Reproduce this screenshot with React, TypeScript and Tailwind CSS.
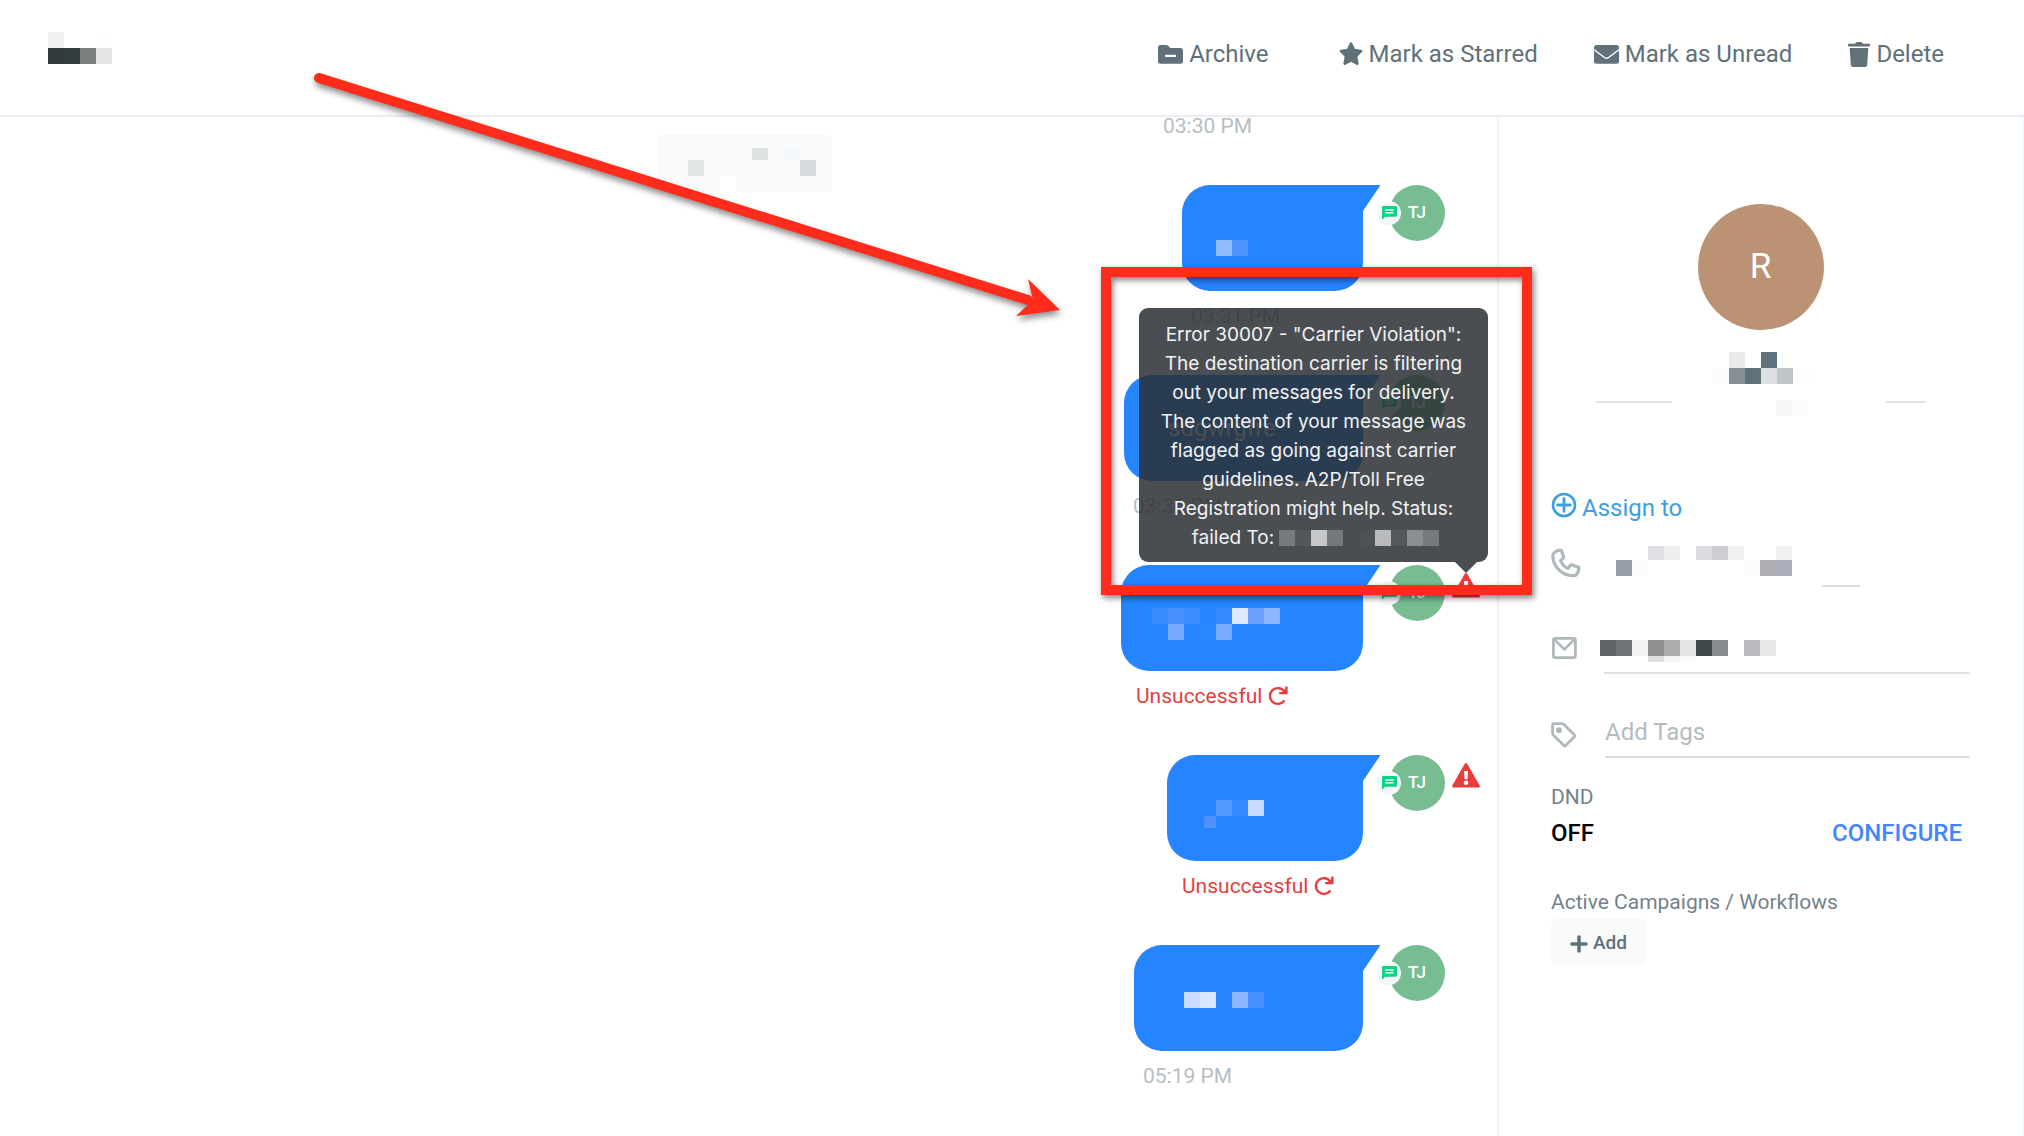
import React from "react";

type Row = string[];

/* Redacted text, drawn as rows of flat cells; an empty string leaves a gap. */
function Mosaic({ rows, className = "" }: { rows: { cells: Row; height?: string }[]; className?: string }) {
  return (
    <div aria-hidden="true" className={className}>
      {rows.map((row, i) => (
        <div key={i} className={`flex ${row.height ?? "h-4"}`}>
          {row.cells.map((c, j) => (
            <span key={j} className={`w-4 shrink-0 ${c}`} />
          ))}
        </div>
      ))}
    </div>
  );
}

function FolderIcon() {
  return (
    <svg viewBox="0 0 25 19" className="h-[19px] w-[25px]" fill="currentColor" aria-hidden="true">
      <path
        fillRule="evenodd"
        d="M2.6 0h5.8c.7 0 1.3.3 1.8.8l2 2.1h10.2A2.5 2.5 0 0 1 25 5.400v10.900a2.500 2.500 0 0 1-2.500 2.500h-20A2.500 2.500 0 0 1 0 16.300V2.600A2.600 2.600 0 0 1 2.600 0zM8 9.800a1.100 1.100 0 0 0 0 2.300h9a1.100 1.100 0 0 0 0-2.300z"
      />
    </svg>
  );
}

function StarIcon() {
  return (
    <svg viewBox="0 0 24 24" className="h-6 w-6" fill="currentColor" aria-hidden="true">
      <path
        d="M12 1.800 15 8.200l7 .9-5.100 4.900 1.300 7.600L12 18.300l-6.200 3.300 1.300-7.600L2 9.100l7-.9z"
        stroke="currentColor"
        strokeWidth="2.800"
        strokeLinejoin="round"
      />
    </svg>
  );
}

function EnvelopeIcon() {
  return (
    <svg viewBox="0 0 25 19" className="h-[19px] w-[25px]" aria-hidden="true">
      <rect width="25" height="18.800" rx="2.500" fill="currentColor" />
      <path d="M-.5 4.200 10.400 12.400c1.300 1 2.900 1 4.200 0L25.500 4.200" fill="none" stroke="#fff" strokeWidth="1.300" />
    </svg>
  );
}

function TrashIcon() {
  return (
    <svg viewBox="0 0 22 25" className="h-[25px] w-[22px]" fill="currentColor" aria-hidden="true">
      <path d="M1 1.700h6L8 .6C8.300.2 8.700 0 9.200 0h3.600c.5 0 .9.200 1.200.6l1 1.100h6c.6 0 1 .4 1 .9v1c0 .5-.4.900-1 .9H1c-.6 0-1-.4-1-.9v-1c0-.5.400-.9 1-.9zM1.700 6h18.600l-1.100 17a2.200 2.200 0 0 1-2.200 2H5a2.200 2.200 0 0 1-2.200-2z" />
    </svg>
  );
}

function RetryIcon() {
  return (
    <svg viewBox="0 0 20 20" className="h-5 w-5" fill="none" stroke="currentColor" strokeWidth="2.400" aria-hidden="true">
      <path d="M16.400 14.400a7.900 7.900 0 1 1 .2-8.500" />
      <path d="M11.200 7.100h7.200V.4" />
      <path d="M18.400 1.800v5.300h-5.400z" fill="currentColor" stroke="none" />
    </svg>
  );
}

function WarningIcon() {
  return (
    <svg viewBox="0 0 28 25" className="h-[25px] w-7" aria-hidden="true">
      <path d="M14 1.500 26.500 23.200h-25z" fill="#ec3d3d" stroke="#ec3d3d" strokeWidth="2.800" strokeLinejoin="round" />
      <path d="M12 8h4l-.5 8.200h-3z" fill="#fff" />
      <circle cx="14" cy="19.700" r="2.300" fill="#fff" />
    </svg>
  );
}

function ChatIcon() {
  return (
    <svg viewBox="0 0 15 14" className="h-[14px] w-[15px]" aria-hidden="true">
      <path d="M1.400 0h12.200C14.400 0 15 .6 15 1.400v8c0 .8-.6 1.400-1.400 1.400H3L0 13.800V1.400C0 .6.600 0 1.400 0z" fill="#0ad483" />
      <path d="M3.300 4h8.400M3.300 6.800h8.400" stroke="#fff" strokeWidth="1.300" />
    </svg>
  );
}

function PlusCircleIcon() {
  return (
    <svg viewBox="0 0 26 26" className="h-[26px] w-[26px]" fill="none" stroke="currentColor" strokeLinecap="round" aria-hidden="true">
      <circle cx="13" cy="13" r="11" strokeWidth="2.600" />
      <path d="M13 6.600v12.800M6.600 13h12.800" strokeWidth="2.800" />
    </svg>
  );
}

function PhoneIcon() {
  return (
    <svg viewBox="0 0 30 30" className="h-[30px] w-[30px]" fill="none" stroke="currentColor" strokeWidth="3.200" strokeLinejoin="round" aria-hidden="true">
      <path d="M3.400 4.600C4.800 3.200 6.700 2.400 9 2.200c1 0 1.500.4 1.800 1.200l1.700 5c.2.800.1 1.300-.5 1.900l-2.400 2.400c1.200 3.200 3.700 6 7.200 7.700l2.400-2.900c.5-.6 1.200-.8 2-.5l5.600 2c.9.300 1.300.9 1.100 1.800-.3 2.100-1 4-2.300 5.600-.6.700-1.300 1.100-2.300 1.200C11.500 28.300 1.500 18.500 1.900 7.200c.1-1 .600-1.800 1.500-2.600z" />
    </svg>
  );
}

function MailIcon() {
  return (
    <svg viewBox="0 0 26 22" className="h-[22px] w-[26px]" fill="none" stroke="currentColor" strokeWidth="2.700" strokeLinejoin="round" aria-hidden="true">
      <rect x="2.400" y="1.400" width="22" height="19.200" rx="1.500" />
      <path d="m3.200 2.400 10.200 10L23.600 2.400" />
    </svg>
  );
}

function TagIcon() {
  return (
    <svg viewBox="0 0 26 26" className="h-[26px] w-[26px]" fill="none" stroke="currentColor" strokeWidth="2.800" strokeLinejoin="round" aria-hidden="true">
      <path d="M2.800 1.700h8.400c.6 0 1.100.2 1.500.6l10.700 10.800c.5.500.5 1.200 0 1.700l-8.800 8.800c-.5.500-1.200.5-1.700 0L2.200 13c-.4-.4-.6-.9-.6-1.500V2.900c0-.7.500-1.200 1.200-1.200z" />
      <circle cx="8" cy="8.200" r="2.900" fill="currentColor" stroke="none" />
    </svg>
  );
}

function PlusIcon() {
  return (
    <svg viewBox="0 0 18 18" className="h-[18px] w-[18px]" fill="none" stroke="currentColor" strokeWidth="3.600" strokeLinecap="round" aria-hidden="true">
      <path d="M9 2v14M2 9h14" />
    </svg>
  );
}

const tooltipLines = [
  'Error 30007 - "Carrier Violation":',
  "The destination carrier is filtering",
  "out your messages for delivery.",
  "The content of your message was",
  "flagged as going against carrier",
  "guidelines. A2P/Toll Free",
  "Registration might help. Status:",
];

function ErrorTooltip() {
  return (
    <div
      role="tooltip"
      className="absolute -right-2 bottom-full z-10 mb-[11px] w-[349px] rounded-[9px] bg-[#2a2f34]/85 pt-3 pb-[10px] text-center font-['Inter',sans-serif] text-[19px] leading-[29px] whitespace-nowrap text-[#f1f2f3]"
    >
      {tooltipLines.map((line) => (
        <div key={line}>{line}</div>
      ))}
      <div className="flex items-center justify-center gap-[5px] pl-1">
        failed To:
        <Mosaic
          rows={[
            {
              cells: ["bg-[#767a7d]", "bg-[#52575b]", "bg-[#c6c7c9]", "bg-[#75787d]", "", "bg-[#4c5155]", "bg-[#b9babc]", "bg-[#53585c]", "bg-[#8b8e91]", "bg-[#767a7c]"],
            },
          ]}
        />
      </div>
      <svg viewBox="0 0 22 11" className="absolute top-full right-[11px] h-[11px] w-[22px]" aria-hidden="true">
        <path d="M0 0h22L11 11z" fill="#4a4e52" />
      </svg>
    </div>
  );
}

type MessageProps = {
  width: string;
  body: React.ReactNode;
  time?: string;
  warning?: boolean;
  tooltip?: boolean;
};

function Message({ width, body, time, warning, tooltip }: MessageProps) {
  return (
    <li className="flex pb-[46px]">
      <div className={width}>
        <div className="relative h-[106px] rounded-[28px] rounded-tr-none bg-[#2584ff] text-white">
          {body}
          <svg viewBox="0 0 18 26" className="absolute top-0 left-full h-[26px] w-[18px]" aria-hidden="true">
            <path d="M0 0h17.500L0 26z" fill="#2584ff" />
          </svg>
        </div>
        {time ? (
          <time className="mt-3 block pl-[9px] text-[21px] leading-[26px] text-[#b6bec2]">{time}</time>
        ) : (
          <button type="button" className="mt-3 flex items-center gap-[6px] pl-[15px] text-[21px] leading-[26px] text-[#e53e3e]">
            Unsuccessful
            <RetryIcon />
          </button>
        )}
      </div>
      <div className="relative ml-[26px] flex h-14 w-14 items-center justify-center rounded-full bg-[#78bd91] text-[17px] font-medium text-white">
        TJ
        <span className="absolute top-4 -left-3 flex h-6 w-6 items-center justify-center rounded-full bg-[#f4f6fa]">
          <ChatIcon />
        </span>
      </div>
      <div className="ml-[7px] w-7 pt-2">
        {warning && (
          <div className="relative" role="img" aria-label="Delivery failed">
            <WarningIcon />
            {tooltip && <ErrorTooltip />}
          </div>
        )}
      </div>
    </li>
  );
}

function Header() {
  const item = "flex items-center gap-[6px]";
  return (
    <header className="flex h-[117px] shrink-0 items-start justify-between border-b-2 border-[#ecedf3] pr-20 pl-12">
      <Mosaic
        className="pt-8"
        rows={[
          { cells: ["bg-[#f1f1f1]", "", "", "bg-[#fdfdfd]"] },
          { cells: ["bg-[#333b3d]", "bg-[#353d40]", "bg-[#7b807f]", "bg-[#e4e6e5]"] },
        ]}
      />
      <nav aria-label="Conversation actions" className="flex gap-14 pt-[38px] text-[24px] leading-8 text-[#607179]">
        <button type="button" className={`${item} mr-3.5`}>
          <FolderIcon />
          Archive
        </button>
        <button type="button" className={item}>
          <StarIcon />
          Mark as Starred
        </button>
        <button type="button" className={item}>
          <EnvelopeIcon />
          Mark as Unread
        </button>
        <button type="button" className={item}>
          <TrashIcon />
          Delete
        </button>
      </nav>
    </header>
  );
}

function Annotations() {
  return (
    <>
      <div className="pointer-events-none absolute top-[150px] right-[-35px] z-20 h-[328px] w-[431px] border-[10px] border-[#ff2c1c] drop-shadow-[2px_3px_3px_rgba(0,0,0,0.5)]" />
      <svg
        viewBox="0 0 760 260"
        className="pointer-events-none absolute -top-[57px] right-[427px] z-20 h-[260px] w-[760px] drop-shadow-[1px_4px_3px_rgba(0,0,0,0.45)]"
        aria-hidden="true"
      >
        <path d="M9 18 718 240" stroke="#ff2c1c" strokeWidth="10" strokeLinecap="round" />
        <path d="M750 250 718 219 723 240 706 256z" fill="#ff2c1c" />
      </svg>
    </>
  );
}

function Conversation() {
  return (
    <main className="relative flex min-w-0 flex-1">
      <div className="flex flex-1 justify-end pt-[17px] pr-[265px]">
        <div className="h-[58px] w-[175px] rounded-t-lg bg-[#f9fafc]">
          <Mosaic
            className="pt-[14px] pl-[15px]"
            rows={[
              { height: "h-3", cells: ["", "", "", "", "", "bg-[#dde3e3]", "", "bg-[#f4f8fb]"] },
              { cells: ["", "bg-[#e2e6e7]", "", "", "", "", "", "", "bg-[#d5dadf]"] },
              { cells: ["", "", "", "bg-white"] },
            ]}
          />
        </div>
      </div>
      <ol className="-mt-1 flex w-[400px] shrink-0 flex-col items-end pr-[17px]">
        <li className="w-[317px] pb-[46px]">
          <time className="block text-[21px] leading-[26px] text-[#b6bec2]">03:30 PM</time>
        </li>
        <Message
          width="w-[181px]"
          time="03:31 PM"
          body={<Mosaic className="pt-[55px] pl-[34px]" rows={[{ cells: ["bg-[#92baff]", "bg-[#5093ff]"] }]} />}
        />
        <Message
          width="w-[239px]"
          time="03:36 PM"
          body={<p className="pt-[37px] pl-[44px] text-[24px] leading-8">sdgwrgfre</p>}
        />
        <Message
          width="w-[242px]"
          warning
          tooltip
          body={
            <Mosaic
              className="pt-[43px] pl-[31px]"
              rows={[
                { cells: ["bg-[#3a8bff]", "bg-[#4791ff]", "bg-[#3d8dff]", "", "bg-[#338aff]", "bg-[#dfe8ff]", "bg-[#6a9fff]", "bg-[#8fb5ff]"] },
                { cells: ["", "bg-[#76aaff]", "", "bg-[#2b87ff]", "bg-[#78acff]"] },
              ]}
            />
          }
        />
        <Message
          width="w-[196px]"
          warning
          body={
            <Mosaic
              className="pt-[45px] pl-[33px]"
              rows={[
                { cells: ["", "bg-[#5399ff]", "bg-[#338aff]", "bg-[#c7dcff]"] },
                { height: "h-3", cells: ["bg-[#5090ff] ml-1 -mr-1 max-w-3"] },
              ]}
            />
          }
        />
        <Message
          width="w-[229px]"
          time="05:19 PM"
          body={
            <Mosaic
              className="pt-[47px] pl-[50px]"
              rows={[{ cells: ["bg-[#c8dbff]", "bg-[#d9e7ff]", "", "bg-[#8cb5ff]", "bg-[#4690ff]"] }]}
            />
          }
        />
      </ol>
      <Annotations />
    </main>
  );
}

function ContactPanel() {
  return (
    <aside className="flex w-[527px] shrink-0 flex-col border-r-2 border-l-2 border-r-[#f5f9fb] border-l-[#eff1f4] pr-[52px] pl-[52px]">
      <div className="mt-[87px] flex h-[126px] w-[126px] items-center justify-center self-center rounded-full bg-[#bb9273] text-[35px] text-white">
        R
      </div>
      <Mosaic
        className="mt-[22px] self-center"
        rows={[
          { cells: ["", "bg-[#e9eaeb]", "", "bg-[#5f717a]"] },
          { cells: ["bg-[#fbfdfc]", "bg-[#868f95]", "bg-[#5f717a]", "bg-[#dde0e3]", "bg-[#bdc6c8]", "bg-[#fdfdfd]"] },
        ]}
      />
      <div className="mt-4 flex w-[330px] items-start self-center">
        <span className="mt-px h-0.5 w-[76px] bg-[#dfe2e6]" />
        <Mosaic className="ml-[104px]" rows={[{ cells: ["bg-[#f7f9f9]", "bg-[#fafcfc]"] }]} />
        <span className="mt-px ml-auto h-0.5 w-10 bg-[#dfe2e6]" />
      </div>

      <button type="button" className="mt-[76px] flex items-start gap-[5px] self-start text-[24px] leading-8 text-[#3d9fe0]">
        <PlusCircleIcon />
        Assign to
      </button>

      <div className="mt-[22px] flex h-[41px] items-start text-[#afb8bb]">
        <span className="mt-[2px]">
          <PhoneIcon />
        </span>
        <Mosaic
          className="ml-[35px]"
          rows={[
            {
              height: "h-[14px]",
              cells: ["", "", "bg-[#dfe0e4]", "bg-[#edeef0]", "", "bg-[#dcdde2]", "bg-[#cdced2]", "bg-[#f1f1f1]", "", "", "bg-[#eff0f2]"],
            },
            {
              cells: ["bg-[#969ea7]", "bg-[#fbfdfc]", "", "", "", "", "", "", "bg-[#fbfdfc]", "bg-[#adafb2]", "bg-[#adb0bb]"],
            },
          ]}
        />
        <span className="ml-[30px] h-0.5 w-[38px] self-end bg-[#dadddf]" />
      </div>

      <div className="mt-[50px] flex items-start text-[#afb8bb]">
        <MailIcon />
        <div className="ml-[27px] h-[37px] flex-1 border-b-2 border-[#dfe2e4]">
          <Mosaic
            className="-ml-1 pt-[3px]"
            rows={[
              {
                cells: ["bg-[#5e6466]", "bg-[#6f7577]", "bg-[#f2f2f2]", "bg-[#8e9092]", "bg-[#abacae]", "bg-[#e4e4e4]", "bg-[#3e4749]", "bg-[#888b8f]", "", "bg-[#babbbe]", "bg-[#e7e7e7]"],
              },
              { height: "h-[6px]", cells: ["", "", "", "bg-[#dcdfde]", "bg-[#f3f3f3]", "bg-[#fbfbfb]"] },
            ]}
          />
        </div>
      </div>

      <label className="mt-[42px] flex items-start text-[#afb8bb]">
        <span className="mt-[6px]">
          <TagIcon />
        </span>
        <input
          type="text"
          aria-label="Tags"
          placeholder="Add Tags"
          className="ml-7 h-[42px] min-w-0 flex-1 border-b-2 border-[#dadddf] pb-2 text-[24px] leading-8 text-[#607179] outline-none placeholder:text-[#b4bcbf]"
        />
      </label>

      <h2 className="mt-[27px] text-[21px] leading-6 text-[#74828b]">DND</h2>
      <div className="mt-2 flex justify-between pr-2 text-[24px] leading-8 font-medium">
        <span className="text-black">OFF</span>
        <button type="button" className="text-[#4285ff]">
          CONFIGURE
        </button>
      </div>

      <h2 className="mt-[41px] text-[21px] leading-6 text-[#74828b]">Active Campaigns / Workflows</h2>
      <button
        type="button"
        className="mt-1 flex h-[49px] items-center gap-[5px] self-start rounded-lg bg-[#f9fafc] px-[19px] pt-0.5 text-[19px] font-medium text-[#607179]"
      >
        <PlusIcon />
        Add
      </button>
    </aside>
  );
}

export default function App() {
  return (
    <div className="flex min-h-screen flex-col bg-white font-['Roboto',sans-serif]">
      <Header />
      <div className="flex flex-1">
        <Conversation />
        <ContactPanel />
      </div>
    </div>
  );
}
